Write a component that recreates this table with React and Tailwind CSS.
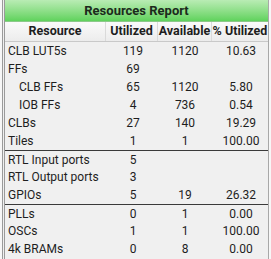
import React from "react";

const groups = [
  [
    ["CLB LUT5s", "119", "1120", "10.63"],
    ["FFs", "69", "", ""],
    ["CLB FFs", "65", "1120", "5.80", true],
    ["IOB FFs", "4", "736", "0.54", true],
    ["CLBs", "27", "140", "19.29"],
    ["Tiles", "1", "1", "100.00"],
  ],
  [
    ["RTL Input ports", "5", "", ""],
    ["RTL Output ports", "3", "", ""],
    ["GPIOs", "5", "19", "26.32"],
  ],
  [
    ["PLLs", "0", "1", "0.00"],
    ["OSCs", "1", "1", "100.00"],
    ["4k BRAMs", "0", "8", "0.00"],
  ],
];

const cols = "grid grid-cols-[101px_52px_54px_56px]";

export default function App() {
  return (
    <div className="w-[271px] h-[259px] overflow-hidden bg-[#f7f7f7] pl-[2px] font-['Roboto',sans-serif] text-[12px] text-[#1e1e1e]">
      <div className="h-full w-[267px] border-l-[3px] border-double border-[#9a9a9a] border-r border-r-[#a8a8a8] bg-[#f0f0f0]">
        {/* Title bar */}
        <div className="h-[22px] flex items-center justify-center bg-gradient-to-b from-[#b9ecb4] to-[#5fd25c] font-bold text-[13px] text-[#1c2a1c] border-b border-[#8cc98a]">
          Resources Report
        </div>

        {/* Column headers */}
        <div className={`${cols} h-[20px] bg-gradient-to-b from-[#fafafa] to-[#ececec] border-b border-[#c9c9c9] font-bold text-[12.5px]`}>
          <div className="flex items-center justify-center border-r border-[#dadada]">Resource</div>
          <div className="flex items-center justify-center border-r border-[#dadada]">Utilized</div>
          <div className="flex items-center justify-center border-r border-[#dadada]">Available</div>
          <div className="flex items-center justify-center">% Utilized</div>
        </div>

        {groups.map((rows, g) => (
          <div key={g} className={g > 0 ? "border-t border-[#3a3a3a]" : ""}>
            {rows.map(([name, used, avail, pct, indent], i) => (
              <div key={name} className={`${cols} ${g > 0 && i === 0 ? "h-[17px]" : "h-[18px]"} items-center`}>
                <div className={indent ? "pl-[14px]" : "pl-[3px]"}>{name}</div>
                <div className="text-center pl-[2px]">{used}</div>
                <div className="text-center">{avail}</div>
                <div className="text-center pl-[2px]">{pct}</div>
              </div>
            ))}
          </div>
        ))}
      </div>
    </div>
  );
}
